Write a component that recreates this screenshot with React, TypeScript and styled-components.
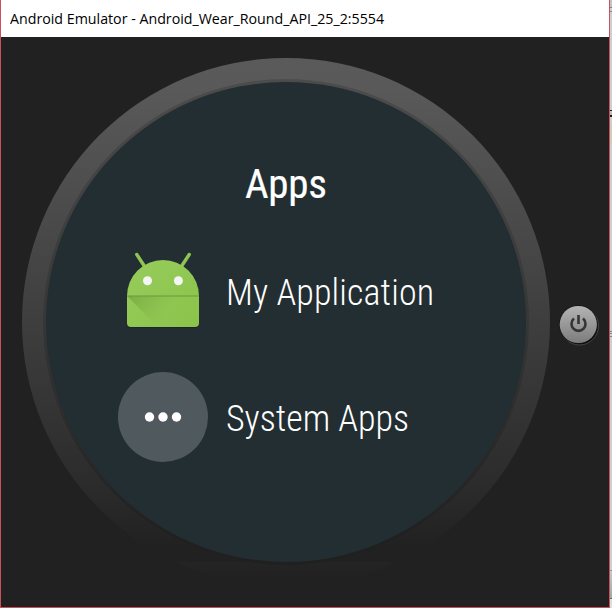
import React from "react";
import styled, { createGlobalStyle } from "styled-components";

const GlobalStyle = createGlobalStyle`
  * { box-sizing: border-box; }
  html, body { margin: 0; background: #d0ced0; overflow: hidden; }
`;

const Desktop = styled.div`
  display: flex;
  width: 612px;
  height: 608px;
  background: #d0ced0;
`;

const Window = styled.main`
  width: 610px;
  height: 608px;
  flex: none;
  display: flex;
  flex-direction: column;
  border: 1px solid #c9505c;
  border-top: 0;
  background: #212121;
`;

const TitleBar = styled.header`
  height: 37px;
  flex: none;
  display: flex;
  align-items: center;
  padding: 0 0 2px 9px;
  background: #fff;
`;

const TitleText = styled.span`
  display: inline-block;
  white-space: nowrap;
  transform-origin: 0 50%;
  transform: scaleX(0.948);
  font: 400 15px/20px "Open Sans", sans-serif;
  color: #000;
`;

const Stage = styled.section`
  flex: 1;
  display: flex;
  align-items: flex-start;
  padding: 21px 0 0 21px;
`;

const Bezel = styled.div`
  width: 528px;
  height: 528px;
  flex: none;
  padding: 21px;
  border-radius: 50%;
  background: linear-gradient(#5a5a5a 0, #595959 6%, #434343 42%, #383838 60%, #2c2c2c 80%, #212121 93%, #212121 95.4%, #242424 95.5%, #212121 99%);
`;

const Rim = styled.div`
  width: 486px;
  height: 486px;
  padding: 3px;
  border-radius: 50%;
  background: linear-gradient(#4c4c4c, #363636 50%, #202020 95%);
`;

const Screen = styled.div`
  width: 480px;
  height: 480px;
  border-radius: 50%;
  padding: 78px 0 0 72px;
  background: #232e32;
  color: #fff;
`;

const Heading = styled.h1`
  margin: 0 0 0 127px;
  height: 48px;
  font: 400 41px/48px "Roboto Condensed", Roboto, sans-serif;
  letter-spacing: -0.3px;
  -webkit-text-stroke: 0.2px #fff;
`;

const AppRow = styled.div`
  display: flex;
  align-items: center;
  gap: 18px;
  height: 90px;
  margin-top: 37px;
`;

const AppIcon = styled.span`
  width: 90px;
  height: 90px;
  flex: none;
  display: block;
`;

const Label = styled.span<{ $drop: number; $tracking?: number }>`
  padding-top: ${(p) => p.$drop}px;
  white-space: nowrap;
  font: 300 36px/44px "Roboto Condensed", Roboto, sans-serif;
  letter-spacing: ${(p) => p.$tracking ?? 0}px;
`;

const PowerButton = styled.button`
  width: 42px;
  height: 42px;
  margin: 246px 0 0 8px;
  padding: 0;
  border: 0;
  background: none;
`;

const Background = styled.aside`
  width: 2px;
  height: 608px;
  background: linear-gradient(
    #c4c3c6 0 7px, #858387 7px 8px, #d0ced0 8px 11px, #858387 11px 12px,
    #d0ced0 12px 110px, #1d1a22 110px 111px, #b4c4dc 111px 113px, #c9b89c 113px 115px,
    #1d1a22 115px 117px, #d0ced0 117px 123px, #d2ccba 123px 144px, #d0ced0 144px 331px,
    #858387 331px 332px, #d0ced0 332px 333px, #858387 333px 334px, #d0ced0 334px 336px,
    #858387 336px 337px, #d0ced0 337px 570px, #969696 570px 571px, #c8c8c8 571px,
    #a5a5a5 598px, #6c6c6c 598px 599px, #dedede 599px
  );
`;

const AndroidIcon = () => (
  <svg width="90" height="90" viewBox="0 0 90 90">
    <defs>
      <linearGradient id="body" x1="0" y1="0" x2="1" y2="1">
        <stop offset="0" stopColor="#97cc5c" />
        <stop offset="1" stopColor="#8bc34a" />
      </linearGradient>
      <linearGradient id="shade" gradientUnits="userSpaceOnUse" x1="9" y1="51" x2="42" y2="78">
        <stop offset="0" stopColor="#5d8b34" stopOpacity=".5" />
        <stop offset="1" stopColor="#7aac42" stopOpacity="0" />
      </linearGradient>
    </defs>
    <path d="M18.800 9.500 26 20.500M71.200 9.500 64 20.500" stroke="#8dc453" strokeWidth="3.400" strokeLinecap="round" />
    <path d="M9 52A36 36 0 0 1 81 52V79Q81 83 77 83H13Q9 83 9 79Z" fill="#172023" opacity=".6" />
    <path d="M9 51A36 36 0 0 1 81 51V78Q81 82 77 82H13Q9 82 9 78Z" fill="url(#body)" />
    <path d="M9 51 40 82H77Q81 82 81 78V51Z" fill="url(#shade)" />
    <path d="M9 51H81" stroke="#689b3c" />
    <circle cx="29.500" cy="35.700" r="4.500" fill="#f5f5f5" />
    <circle cx="60.400" cy="35.700" r="4.500" fill="#f5f5f5" />
  </svg>
);

const MoreIcon = () => (
  <svg width="90" height="90" viewBox="0 0 90 90">
    <circle cx="45" cy="45" r="45" fill="#50595e" />
    <g fill="#fff">
      <circle cx="31.500" cy="45" r="4.700" />
      <circle cx="45" cy="45" r="4.700" />
      <circle cx="58.500" cy="45" r="4.700" />
    </g>
  </svg>
);

const PowerIcon = () => (
  <svg width="42" height="42" viewBox="0 0 42 42">
    <defs>
      <linearGradient id="metal" x1="0" y1="0" x2="0" y2="1">
        <stop offset="0" stopColor="#b4b4b4" />
        <stop offset="1" stopColor="#7c7c7c" />
      </linearGradient>
    </defs>
    <circle cx="21.500" cy="22" r="19" fill="#0f0f0f" stroke="#454545" />
    <circle cx="20.300" cy="20.500" r="19.300" fill="#161616" />
    <circle cx="20.300" cy="20.500" r="18.600" fill="url(#metal)" />
    <path d="M20.500 11V20M16 14.500A7 7 0 1 0 25 14.500" fill="none" stroke="#353535" strokeWidth="2.600" />
  </svg>
);

export default function App() {
  return (
    <Desktop>
      <GlobalStyle />
      <Window>
        <TitleBar>
          <TitleText>Android Emulator - Android_Wear_Round_API_25_2:5554</TitleText>
        </TitleBar>
        <Stage>
          <Bezel>
            <Rim>
              <Screen>
                <Heading>Apps</Heading>
                <AppRow>
                  <AppIcon><AndroidIcon /></AppIcon>
                  <Label $drop={6} $tracking={0.12}>My Application</Label>
                </AppRow>
                <AppRow>
                  <AppIcon><MoreIcon /></AppIcon>
                  <Label $drop={4}>System Apps</Label>
                </AppRow>
              </Screen>
            </Rim>
          </Bezel>
          <PowerButton aria-label="Power"><PowerIcon /></PowerButton>
        </Stage>
      </Window>
      <Background />
    </Desktop>
  );
}
